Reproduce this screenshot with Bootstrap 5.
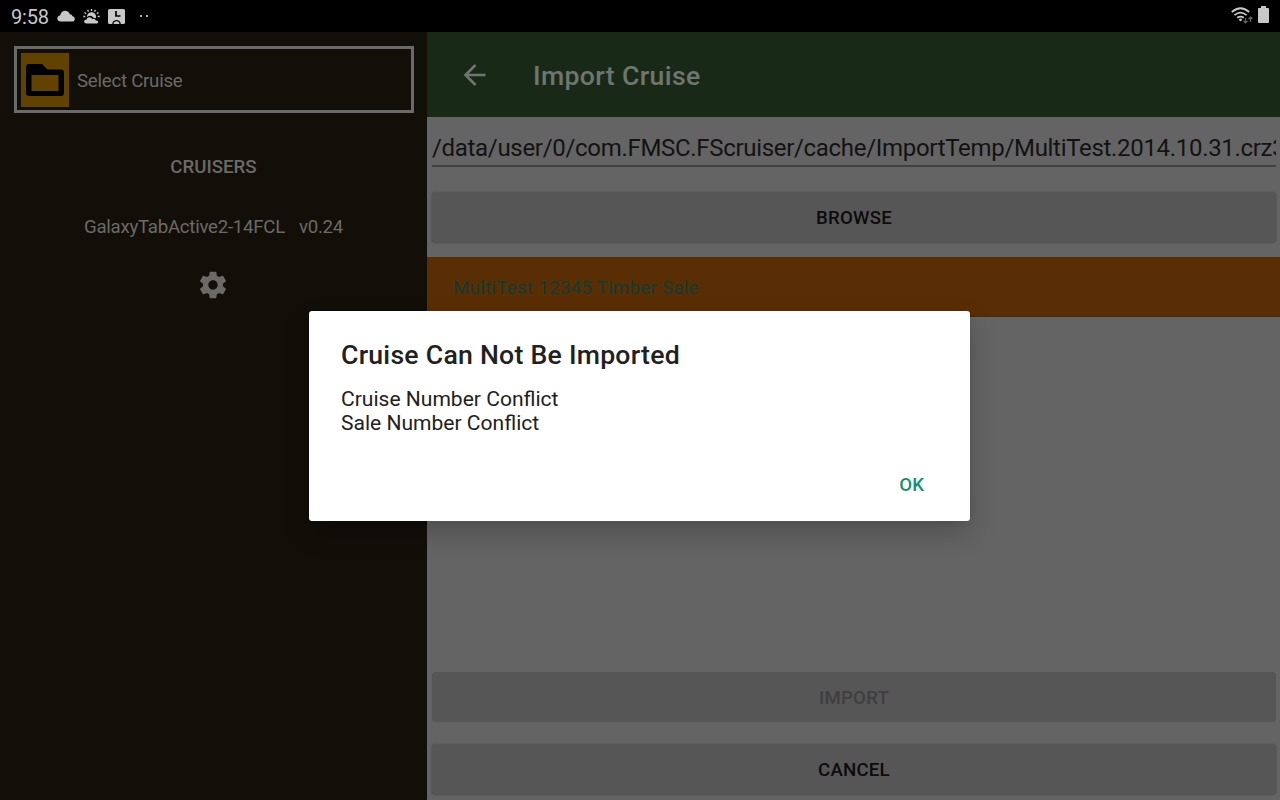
<!DOCTYPE html>
<html lang="en">
<head>
<meta charset="utf-8">
<meta name="viewport" content="width=device-width, initial-scale=1">
<title>Import Cruise</title>
<link href="https://cdn.jsdelivr.net/npm/bootstrap@5.3.0/dist/css/bootstrap.min.css" rel="stylesheet">
<style>
  body { font-family: Roboto, "Noto Sans", sans-serif; height: 800px; background: #646464; line-height: 1.2; }
  .statusbar { height: 32px; background: #000; color: #c8c8c8; font-size: 20px; padding-left: 11px; padding-right: 11px; }
  .clock { letter-spacing: -.15px; padding-top: 2px; }
  .statusbar svg, .side svg, .appbar svg { display: block; flex: none; }
  .side { width: 427px; background: #120f09; color: #6b6a67; font-size: 18.67px; }
  .select-cruise { margin: 14px 13px 0 14px; height: 67px; border: 3px solid #6a6a6a; padding-left: 4px; letter-spacing: -.25px; }
  .select-cruise span { padding-top: 3px; }
  .folder-tile { width: 48px; height: 54px; background: #624200; margin-right: 8px; }
  .cruisers-title { margin-top: 42px; line-height: 24px; font-weight: 500; }
  .device { margin-top: 36px; line-height: 24px; letter-spacing: -.27px; }
  .appbar { height: 85px; background: #182a17; color: #6f756f; padding-left: 36px; font-size: 26.67px; font-weight: 500; letter-spacing: .37px; }
  .path-field { height: 50px; margin: 0 4px 0 5px; border-bottom: 2px solid #414141; color: #131313; font-size: 24px; line-height: 62px; letter-spacing: -.31px; white-space: nowrap; }
  .btn.action { height: 50px; margin: 0 4px 0 5px; padding: 1px 0 0; border: 0; border-radius: 3px; background: #565656; color: #0c0c0c; font-size: 18.67px; font-weight: 500; line-height: 50px; letter-spacing: .2px; }
  .btn.action.raised { box-shadow: 0 1px 2px rgba(0,0,0,.15), 0 0 2px #555; }
  .btn.action:disabled { opacity: 1; color: #3f3f3f; }
  .sale-row { height: 60px; margin-top: 15px; padding-left: 26px; background: #5a2e05; color: #133c30; border-bottom: 1px solid #4d2906; font-size: 18.67px; line-height: 62px; letter-spacing: .29px; }
  .overlay-layer { position: absolute; inset: 0; padding-top: 311px; padding-left: 309px; }
  .alert-box { width: 661px; height: 210px; background: #fff; border: 0; border-radius: 3px; padding: 28px 46px 22px 32px; color: #212121; box-shadow: 0 12px 28px rgba(0,0,0,.2), 0 2px 6px rgba(0,0,0,.06); }
  .alert-box h1 { font-size: 26.67px; font-weight: 500; line-height: 32px; margin: 0 0 16px; letter-spacing: .24px; }
  .alert-box p { font-size: 21.05px; line-height: 24px; margin: 0; }
  .ok-button { color: #178f72; font-size: 18.67px; font-weight: 500; line-height: 28px; text-decoration: none; }
</style>
</head>
<body class="d-flex flex-column overflow-hidden position-relative">
<header class="statusbar d-flex align-items-center flex-shrink-0">
  <span class="clock">9:58</span>
  <svg width="18" height="12" viewBox="0 0 18 12" fill="#c8c8c8" style="margin-left:8px"><path d="M4 11.500C1.700 11.500.3 10.300.3 8.500c0-1.700 1.200-2.900 2.800-3.100C3.700 2.500 5.700.8 8.200.8c2.200 0 4 1.300 4.700 3.400 1.500 0 2.300.8 2.500 2 1.500.3 2.400 1.300 2.400 2.700 0 1.600-1.200 2.600-2.800 2.600z"/></svg>
  <svg width="17" height="15" viewBox="0 0 17 15" style="margin-left:8px"><g fill="none" stroke="#c8c8c8" stroke-width="1.300"><path d="M8.500 0v2M4.600.9l.9 1.700M12.400.9l-.9 1.700M1.500 3.500l1.700 1.100M15.500 3.500l-1.700 1.100M.3 7.500h2M14.700 7.500h2"/></g><path d="M3.900 7.700a4.600 4.600 0 0 1 9.200.1q0 .9-.3 1.400-1-.7-2.300-.4Q8.800 6.200 5.800 6.900 4.300 7.300 3.900 8.500zM3.500 14.500C.3 14.500.3 10.800 3.600 10.600 4.300 7.500 8 7.500 9.200 10.200c1.600-.9 3.200-.1 3.500 1.300 3.300-.2 3.400 3 .5 3z" fill="#c8c8c8"/></svg>
  <svg width="17" height="15" viewBox="0 0 17 15" style="margin-left:8px"><path d="M1.500 0h14Q17 0 17 1.500v12Q17 15 15.500 15h-2.700C12.500 9.700 4.500 9.700 4.200 15H1.500Q0 15 0 13.500v-12Q0 0 1.500 0z" fill="#c8c8c8"/><path d="M8 2v5h4.500" fill="none" stroke="#000" stroke-width="1.700"/><path d="M5.700 15v-1.300Q8.500 11 11.300 13.700V15z" fill="#c8c8c8"/></svg>
  <svg width="9" height="2" viewBox="0 0 9 2" style="margin-left:15px" fill="#aaa"><path d="M0 0h2v2H0zM6 0h2v2H6z"/></svg>
  <svg class="ms-auto" width="23" height="18" viewBox="0 0 23 18" fill="none"><g stroke="#c8c8c8" stroke-width="1.700"><path d="M.8 5Q9.500-2.500 18.200 5M3.500 8.200Q9.500 3 15.500 8.200M6.200 10.800Q9.500 8.300 12.800 10.800"/></g><circle cx="9.500" cy="12.800" r="1.400" fill="#c8c8c8"/><path d="M14.500 11v5M12.500 14l2 2 2-2M19.500 15v-5M17.500 12l2-2 2 2" stroke="#666" stroke-width="1.200"/></svg>
  <svg width="11" height="17" viewBox="0 0 11 17" style="margin-left:4px;margin-bottom:3px"><path d="M3 0h5v2h2q1 0 1 1v13q0 1-1 1H1q-1 0-1-1V3q0-1 1-1h2z" fill="#c8c8c8"/></svg>
</header>

<div class="d-flex flex-grow-1">
  <aside class="side flex-shrink-0 d-flex flex-column">
    <div class="select-cruise d-flex align-items-center">
      <div class="folder-tile d-flex align-items-center justify-content-center">
        <svg width="38" height="32" viewBox="0 0 38 32"><path fill-rule="evenodd" d="M3 0h13l5.500 5.500H35q3 0 3 3V29q0 3-3 3H3q-3 0-3-3V3q0-3 3-3zM5.500 11v16h27V11z"/></svg>
      </div>
      <span>Select Cruise</span>
    </div>
    <div class="cruisers-title text-center">CRUISERS</div>
    <div class="device d-flex justify-content-center"><span>GalaxyTabActive2-14FCL</span><span style="margin-left:14px">v0.24</span></div>
    <svg width="32" height="32" viewBox="0 0 24 24" fill="#6b6a67" style="margin-top:30px;margin-left:197px"><path d="M19.430 12.980c.04-.32.07-.64.07-.98s-.03-.66-.07-.98l2.110-1.650c.19-.15.24-.42.12-.64l-2-3.460c-.12-.22-.39-.3-.61-.22l-2.490 1c-.52-.4-1.080-.73-1.690-.98l-.38-2.650C14.460 2.180 14.250 2 14 2h-4c-.25 0-.46.18-.49.420l-.38 2.650c-.61.25-1.170.59-1.690.98l-2.490-1c-.23-.09-.49 0-.61.22l-2 3.460c-.13.22-.07.49.12.64l2.110 1.650c-.04.32-.07.65-.07.98s.03.66.07.98l-2.110 1.650c-.19.15-.24.42-.12.64l2 3.460c.12.22.39.3.61.22l2.490-1c.52.4 1.080.73 1.690.98l.38 2.650c.03.24.24.42.49.42h4c.25 0 .46-.18.49-.42l.38-2.650c.61-.25 1.170-.59 1.690-.98l2.490 1c.23.09.49 0 .61-.22l2-3.460c.12-.22.07-.49-.12-.64l-2.110-1.650zM12 15.500c-1.930 0-3.500-1.570-3.500-3.500s1.570-3.500 3.500-3.500 3.500 1.570 3.500 3.500-1.570 3.500-3.500 3.500z"/></svg>
  </aside>

  <main class="flex-grow-1 d-flex flex-column" style="min-width:0">
    <nav class="appbar d-flex align-items-center flex-shrink-0">
      <svg width="24" height="24" viewBox="0 0 24 24" fill="none" stroke="#6f756f" stroke-width="2.600"><path d="M22.500 12H3M12.500 2L2.500 12 12.500 22"/></svg>
      <span style="margin-left:46px;padding-top:3px">Import Cruise</span>
    </nav>
    <div class="path-field overflow-hidden">/data/user/0/com.FMSC.FScruiser/cache/ImportTemp/MultiTest.2014.10.31.crz3</div>
    <button class="btn action raised" style="margin-top:25px">BROWSE</button>
    <div class="sale-row">MultiTest 12345 Timber Sale</div>
    <button class="btn action mt-auto" disabled>IMPORT</button>
    <button class="btn action raised" style="margin-top:22px;margin-bottom:6px">CANCEL</button>
  </main>
</div>

<div class="overlay-layer">
  <section class="alert-box d-flex flex-column" role="alertdialog">
    <h1>Cruise Can Not Be Imported</h1>
    <p>Cruise Number Conflict<br>Sale Number Conflict</p>
    <a href="#" class="ok-button mt-auto align-self-end">OK</a>
  </section>
</div>
<script src="https://cdn.jsdelivr.net/npm/bootstrap@5.3.0/dist/js/bootstrap.bundle.min.js"></script>
</body>
</html>
